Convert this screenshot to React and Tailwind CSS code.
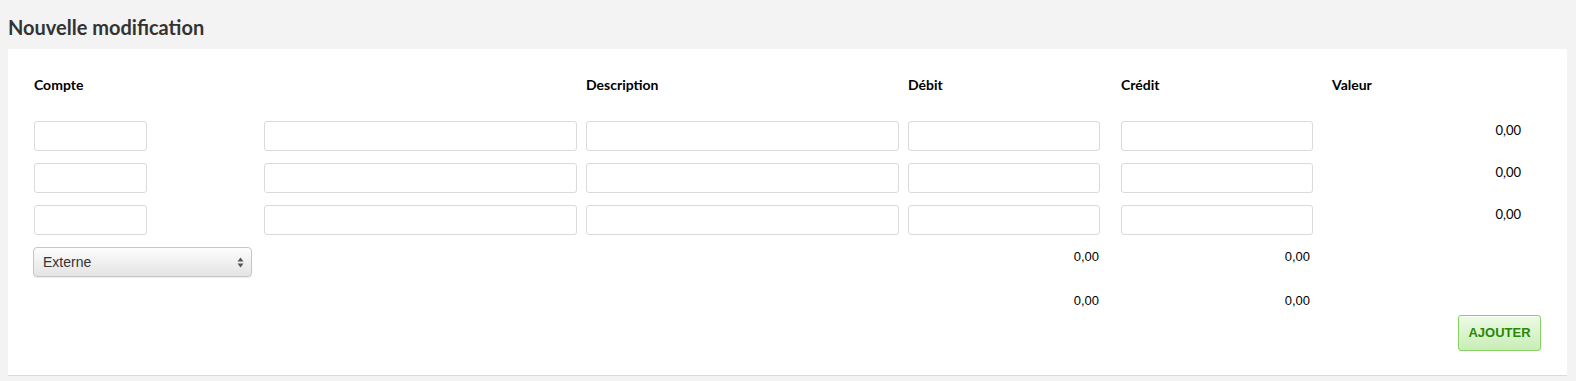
import React from 'react';

const lato = { fontFamily: 'Lato, "Open Sans", sans-serif' };

const Field = ({ w }) => (
  <div className={`${w} h-[30px] bg-white border border-[#dadada] rounded-[3px]`} />
);

const rows = [0, 1, 2];

export default function App() {
  return (
    <div className="min-h-screen bg-[#f3f3f3] pl-2 pr-[9px] font-['Liberation_Sans',Arial,sans-serif] text-[13px] text-black">
      <h2 className="pt-[13px] h-[41px] mb-2 text-[20px] leading-[28px] font-bold text-[#333] font-['Lato',sans-serif]">
        Nouvelle modification
      </h2>

      <div className="bg-white border-b border-[#dcdcdc] px-[26px] pt-[26px] pb-[24px]">
        {/* en-têtes */}
        <div className="flex h-5 text-[14px] leading-5 font-bold font-['Lato',sans-serif]">
          <div className="w-[230px]">Compte</div>
          <div className="w-[322px]" />
          <div className="w-[322px]">Description</div>
          <div className="w-[213px]">Débit</div>
          <div className="w-[211px]">Crédit</div>
          <div className="w-[189px]">Valeur</div>
        </div>

        {/* lignes de saisie */}
        <div className="mt-[26px] flex flex-col gap-3">
          {rows.map((r) => (
            <div key={r} className="flex h-[30px]">
              <div className="w-[230px]"><Field w="w-[113px]" /></div>
              <div className="w-[322px]"><Field w="w-[313px]" /></div>
              <div className="w-[322px]"><Field w="w-[313px]" /></div>
              <div className="w-[213px]"><Field w="w-[192px]" /></div>
              <div className="w-[211px]"><Field w="w-[192px]" /></div>
              <div className="w-[189px] text-right text-[13px] leading-[19px]" style={lato}>0,00</div>
            </div>
          ))}

          {/* type + totaux */}
          <div className="flex h-[30px]">
            <div className="w-[552px]">
              <div className="w-[219px] h-[30px] -ml-px flex items-center justify-between pl-[9px] pr-[7px] rounded-[4px] border border-[#c6c6c6] bg-gradient-to-b from-[#fdfdfd] to-[#e4e4e4] shadow-[0_1px_1px_rgba(0,0,0,0.08)] text-[14px] text-[#333]">
                <span>Externe</span>
                <svg width="7" height="11" viewBox="0 0 7 11">
                  <path d="M3.5 0.5 L6.5 4.5 L0.5 4.5 Z" fill="#555" />
                  <path d="M3.5 10.5 L6.5 6.5 L0.5 6.5 Z" fill="#555" />
                </svg>
              </div>
            </div>
            <div className="w-[322px]" />
            <div className="w-[213px]"><div className="w-[191px] text-right leading-[19px]">0,00</div></div>
            <div className="w-[211px]"><div className="w-[189px] text-right leading-[19px]">0,00</div></div>
          </div>
        </div>

        <div className="flex h-[19px] mt-[14px]">
          <div className="w-[874px]" />
          <div className="w-[213px]"><div className="w-[191px] text-right leading-[19px]">0,00</div></div>
          <div className="w-[211px]"><div className="w-[189px] text-right leading-[19px]">0,00</div></div>
        </div>

        <div className="flex justify-end mt-[5px]">
          <button className="w-[83px] h-[36px] rounded-[3px] border border-[#86d064] bg-gradient-to-b from-[#ecfbe4] to-[#c9edb6] text-[#2a8605] font-bold text-[13px] shadow-[inset_0_1px_0_rgba(255,255,255,0.8)]">
            AJOUTER
          </button>
        </div>
      </div>
    </div>
  );
}
